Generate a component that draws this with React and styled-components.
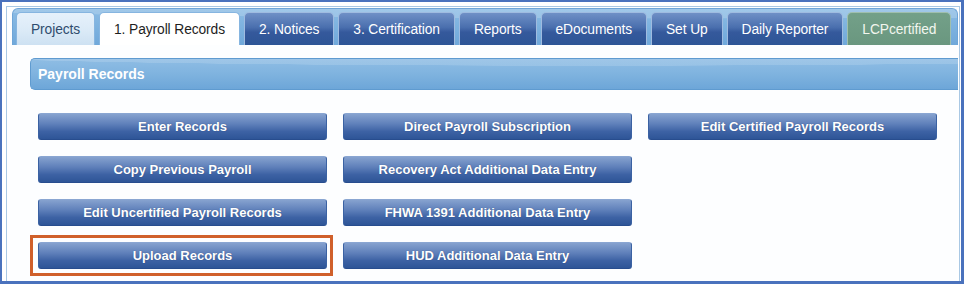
import React from "react";
import styled, { createGlobalStyle } from "styled-components";

const Global = createGlobalStyle`
  html, body { margin: 0; padding: 0; background: #ffffff; }
  body { font-family: "Liberation Sans", Arial, sans-serif; }
  * { box-sizing: border-box; }
`;

const Frame = styled.div`
  width: 964px;
  height: 284px;
  border-style: solid;
  border-color: #4a72bd;
  border-width: 2px 3px 3px 2px;
  padding: 4px 1px 0 4px;
  background: #ffffff;
  overflow: hidden;
  display: flex;
`;

const Widget = styled.div`
  flex: 1;
  display: flex;
  flex-direction: column;
  border: 1px solid #a9c8e4;
  border-bottom: none;
  padding: 1px 1px 0 5px;
  background: #fdfeff;
`;

const TabHeader = styled.div`
  display: flex;
  align-items: flex-end;
  gap: 4px;
  height: 37px;
  padding: 2px 4px 0 3px;
  border: 1px solid #6ea5d8;
  border-bottom: none;
  border-radius: 6px 6px 0 0;
  background:
    radial-gradient(ellipse 140% 60% at 70% -10%, rgba(255,255,255,0.18) 60%, rgba(255,255,255,0) 61%),
    linear-gradient(180deg, #8cbce4 0%, #7db2df 50%, #70a8da 100%);
`;

const tabSkins = {
  light: `
    background: linear-gradient(180deg, #e6f1fb 0%, #dbeaf7 55%, #cde1f2 100%);
    border-color: #86b5e0;
    color: #2f4c6e;
  `,
  active: `
    background: #ffffff;
    border-color: #86b5e0;
    color: #1e1e1e;
  `,
  dark: `
    background: linear-gradient(180deg, #6f90c6 0%, #4a6fae 45%, #35599c 60%, #2d5596 100%);
    border-color: #9fbbe0;
    color: #ffffff;
  `,
  green: `
    background: linear-gradient(180deg, #73a089 0%, #6a977f 100%);
    border-color: #9fbfae;
    color: #f2f6ee;
  `,
};

const Tab = styled.div`
  height: 33px;
  display: flex;
  align-items: center;
  justify-content: center;
  padding: 0 14px;
  border: 1px solid;
  border-bottom: none;
  border-radius: 5px 5px 0 0;
  font-size: 13.8px;
  letter-spacing: -0.1px;
  white-space: nowrap;
  ${(p) => tabSkins[p.$kind]}
`;

const Panel = styled.div`
  flex: 1;
  padding: 13px 0 0 18px;
  display: flex;
  flex-direction: column;
`;

const SectionBar = styled.div`
  height: 32px;
  display: flex;
  align-items: center;
  padding: 0 7px;
  border: 1px solid #5f9bd0;
  border-right: none;
  border-radius: 5px 0 0 5px;
  color: #ffffff;
  font-size: 14px;
  font-weight: bold;
  background:
    radial-gradient(ellipse 120% 70% at 60% -20%, rgba(255,255,255,0.14) 60%, rgba(255,255,255,0) 61%),
    linear-gradient(180deg, #8fbde4 0%, #7fb3df 50%, #6da6d8 100%);
`;

const ButtonGrid = styled.div`
  margin: 23px 0 0 8px;
  display: grid;
  grid-template-columns: repeat(3, 289px);
  grid-auto-rows: 27px;
  column-gap: 16px;
  row-gap: 16px;
`;

const ActionButton = styled.button`
  position: relative;
  width: 100%;
  height: 27px;
  margin: 0;
  padding: 0;
  border: 1px solid #3b62a3;
  border-top-color: #8aa6d2;
  border-bottom-color: #284d8e;
  border-radius: 3px;
  background: linear-gradient(180deg, #86a2cf 0%, #5f80ba 40%, #3d62a4 70%, #2e5597 100%);
  color: #ffffff;
  font-family: "Liberation Sans", Arial, sans-serif;
  font-size: 13px;
  font-weight: bold;
  text-shadow: 0 0 1px rgba(20, 40, 80, 0.5);
  cursor: pointer;
  grid-column: ${(p) => p.$col};
  grid-row: ${(p) => p.$row};
  ${(p) =>
    p.$highlight &&
    `
    &::after {
      content: "";
      position: absolute;
      top: -8px;
      bottom: -8px;
      left: -9px;
      right: -7px;
      border: 3px solid #d0602b;
      pointer-events: none;
    }
  `}
`;

const tabs = [
  { label: "Projects", kind: "light" },
  { label: "1. Payroll Records", kind: "active" },
  { label: "2. Notices", kind: "dark" },
  { label: "3. Certification", kind: "dark" },
  { label: "Reports", kind: "dark" },
  { label: "eDocuments", kind: "dark" },
  { label: "Set Up", kind: "dark" },
  { label: "Daily Reporter", kind: "dark" },
  { label: "LCPcertified", kind: "green" },
];

const buttons = [
  { label: "Enter Records", col: 1, row: 1 },
  { label: "Copy Previous Payroll", col: 1, row: 2 },
  { label: "Edit Uncertified Payroll Records", col: 1, row: 3 },
  { label: "Upload Records", col: 1, row: 4, highlight: true },
  { label: "Direct Payroll Subscription", col: 2, row: 1 },
  { label: "Recovery Act Additional Data Entry", col: 2, row: 2 },
  { label: "FHWA 1391 Additional Data Entry", col: 2, row: 3 },
  { label: "HUD Additional Data Entry", col: 2, row: 4 },
  { label: "Edit Certified Payroll Records", col: 3, row: 1 },
];

export default function App() {
  return (
    <>
      <Global />
      <Frame>
        <Widget>
          <TabHeader>
            {tabs.map((t) => (
              <Tab key={t.label} $kind={t.kind}>
                {t.label}
              </Tab>
            ))}
          </TabHeader>
          <Panel>
            <SectionBar>Payroll Records</SectionBar>
            <ButtonGrid>
              {buttons.map((b) => (
                <ActionButton
                  key={b.label}
                  $col={b.col}
                  $row={b.row}
                  $highlight={b.highlight}
                >
                  {b.label}
                </ActionButton>
              ))}
            </ButtonGrid>
          </Panel>
        </Widget>
      </Frame>
    </>
  );
}
